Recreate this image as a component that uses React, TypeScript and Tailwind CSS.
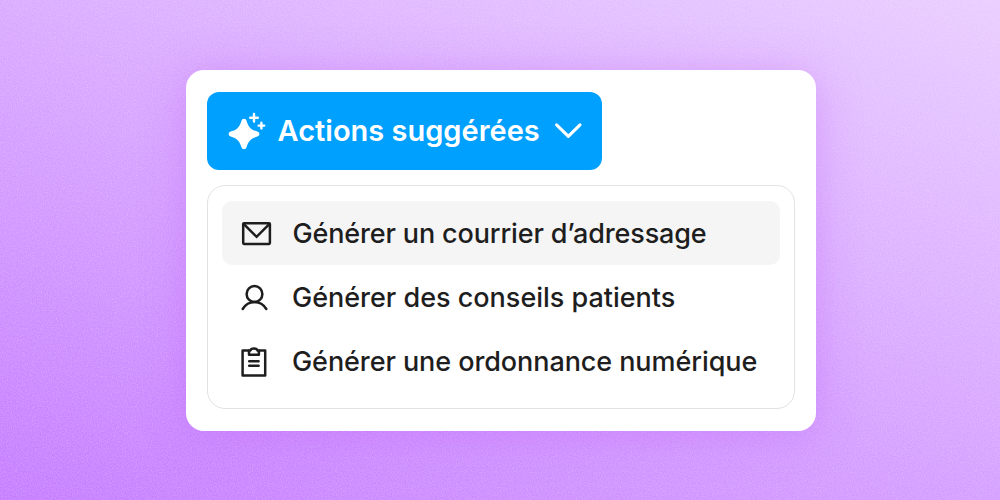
import type { ReactNode } from 'react';
import clsx from 'clsx';

interface Action {
  label: string;
  icon: ReactNode;
  active?: boolean;
  labelClass: string;
}

function SparklesIcon() {
  return (
    <svg className="h-10 w-10 shrink-0" viewBox="0 0 40 40" fill="none">
      <path
        d="M17 7.7C18.3 7.7 19.2 8.5 19.6 9.9C21.2 15.5 23.9 18.7 29.7 20.3C31.4 20.8 32.4 21.7 32.4 23C32.4 24.3 31.4 25.2 29.7 25.7C23.9 27.3 21.2 30.5 19.6 36.1C19.2 37.5 18.3 38.3 17 38.3C15.7 38.3 14.8 37.5 14.4 36.1C12.8 30.5 10.1 27.3 4.3 25.7C2.6 25.2 1.7 24.3 1.7 23C1.7 21.7 2.6 20.8 4.3 20.3C10.1 18.7 12.8 15.5 14.4 9.9C14.8 8.5 15.7 7.7 17 7.7Z"
        fill="currentColor"
      />
      <path
        d="M27 2.9V10.5M23.2 6.7H30.8M34.4 11.8V17.4M31.6 14.6H37.2"
        stroke="currentColor"
        strokeWidth="2.4"
        strokeLinecap="round"
      />
    </svg>
  );
}

function ChevronIcon() {
  return (
    <svg className="h-8 w-8 shrink-0" viewBox="0 0 32 32" fill="none">
      <path
        d="M4.6 9.8L16.3 21.4L28 9.8"
        stroke="currentColor"
        strokeWidth="3.1"
        strokeLinecap="round"
        strokeLinejoin="round"
      />
    </svg>
  );
}

function MailIcon() {
  return (
    <svg className="h-8 w-8 shrink-0" viewBox="0 0 32 32" fill="none" stroke="currentColor" strokeWidth="2.5">
      <rect x="3.2" y="6.2" width="26.7" height="20.7" rx="0.8" />
      <path d="M3.6 6.8L16.6 19.8L29.5 6.8" />
    </svg>
  );
}

function UserIcon() {
  return (
    <svg className="h-8 w-8 shrink-0" viewBox="0 0 32 32" fill="none" stroke="currentColor" strokeWidth="2.5">
      <circle cx="14.5" cy="13" r="7.9" />
      <path d="M2.7 28C5.3 23.6 9.6 20.9 14.5 20.9C19.4 20.9 23.7 23.6 26.3 28" strokeLinecap="round" />
    </svg>
  );
}

function ClipboardIcon() {
  return (
    <svg
      className="h-8 w-8 shrink-0"
      viewBox="0 0 32 32"
      fill="none"
      stroke="currentColor"
      strokeWidth="2.5"
      strokeLinejoin="round"
    >
      <path d="M9 5.6H2.6V30.4H25.2V5.6H18.9" />
      <path d="M9 9.7V5.6H10.2C10.6 4.2 12 3.4 13.9 3.4C15.8 3.4 17.2 4.2 17.6 5.6H18.9V9.7Z" />
      <path d="M9.2 16.3H18.6M9.2 20.8H18.6" strokeLinecap="round" />
    </svg>
  );
}

const actions: Action[] = [
  {
    label: 'Générer un courrier d’adressage',
    icon: <MailIcon />,
    active: true,
    labelClass: 'ml-[20.5px] tracking-[-0.15px]',
  },
  { label: 'Générer des conseils patients', icon: <UserIcon />, labelClass: 'ml-5 tracking-[-0.01px]' },
  { label: 'Générer une ordonnance numérique', icon: <ClipboardIcon />, labelClass: 'ml-5 tracking-[-0.08px]' },
];

function Grain() {
  return (
    <svg className="pointer-events-none absolute inset-0 h-full w-full opacity-20" aria-hidden="true">
      <filter id="grain">
        <feTurbulence type="fractalNoise" baseFrequency="0.8" numOctaves="2" seed="4" />
        <feColorMatrix values="0 0 0 0 1  0 0 0 0 1  0 0 0 0 1  2 0 0 0 -0.7" />
      </filter>
      <rect width="100%" height="100%" filter="url(#grain)" />
    </svg>
  );
}

export default function App() {
  return (
    <main className="relative flex h-[500px] w-[1000px] items-start justify-center overflow-hidden bg-[linear-gradient(20.5deg,#c57cff,#e9cdff)] pt-[70px] font-['Inter',sans-serif]">
      <Grain />
      <section className="relative mr-[-2px] h-[360.5px] w-[630px] rounded-[18px] bg-white px-[21px] pt-[22px] shadow-[0_4px_44px_rgba(185,80,245,0.34)]">
        <button className="flex h-[78px] w-[395px] items-center rounded-xl bg-[#00a0ff] pl-5 text-white">
          <SparklesIcon />
          <span className="mt-[-1px] ml-[10.5px] w-[274.5px] whitespace-nowrap text-left text-[29px] leading-none font-semibold">
            Actions suggérées
          </span>
          <ChevronIcon />
        </button>

        <ul className="mt-[15px] h-[224px] rounded-[18px] border border-[#e2e2e2] px-[14px] pt-[15px] text-[#1e1e1e]">
          {actions.map(({ label, icon, active, labelClass }) => (
            <li
              key={label}
              className={clsx('flex h-16 items-center rounded-[10px] pl-[18px]', active && 'bg-[#f5f5f5]')}
            >
              {icon}
              <span className={clsx('whitespace-nowrap text-[27px] leading-none font-medium', labelClass)}>
                {label}
              </span>
            </li>
          ))}
        </ul>
      </section>
    </main>
  );
}
